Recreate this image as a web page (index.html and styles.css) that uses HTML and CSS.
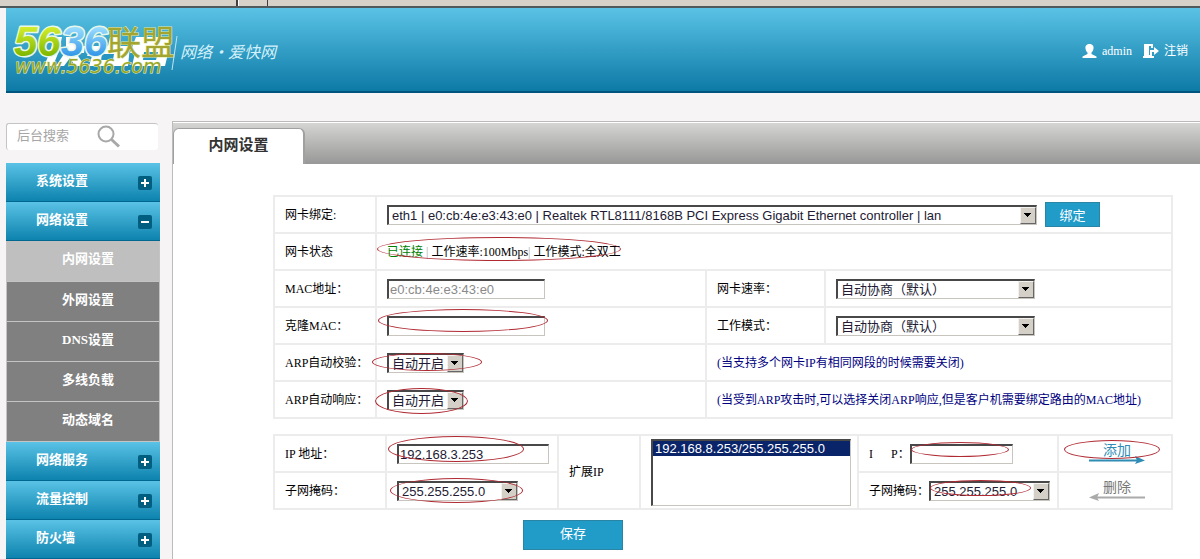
FILE: index.html
```html
<!DOCTYPE html>
<html lang="zh-CN">
<head>
    <meta charset="UTF-8">
    <meta name="viewport" content="width=device-width, initial-scale=1.0">
    <title>内网设置</title>
    <link rel="stylesheet" href="styles.css">
</head>
<body>

<div class="frame-strip"><span class="split wide"></span><span class="split"></span></div>

<div class="page">
    <header class="header">
        <svg class="logo" width="280" height="83" viewBox="0 0 280 83">
            <defs>
                <linearGradient id="green" x1="0" y1="0" x2="0" y2="1">
                    <stop offset="0.200" stop-color="#d3ec2c"/>
                    <stop offset="0.800" stop-color="#7fb800"/>
                </linearGradient>
                <linearGradient id="blue" x1="0" y1="0" x2="0" y2="1">
                    <stop offset="0.200" stop-color="#9adcff"/>
                    <stop offset="0.800" stop-color="#3498e8"/>
                </linearGradient>
            </defs>
            <g fill="#fff">
                <path d="M48 29h8l-3 14-6 15h-9l6-14z"/>
                <path d="M60 29h14l-1 9h6l-1 7h-8l9 13H69l-5-8-6 8h-8l10-15z"/>
                <path d="M86 38h16l2-9h10l-2 9h12l-2 20H83l3-10h-5z"/>
                <path d="M130 29h36l-7 29h-33l3-13h-5z"/>
            </g>
            <g fill="#2796c2">
                <path d="M96 46h12l-1 6H95zM138 44h14l-2 8h-13z"/>
            </g>
            <text class="logo-digits" x="8" y="48"><tspan fill="url(#green)">56</tspan><tspan fill="url(#blue)">36</tspan></text>
            <text class="logo-union" x="101" y="47">联盟</text>
            <text class="logo-url" x="9" y="65">www.5636.com</text>
            <path d="M171 28l-5 34" stroke="#bfe6f4" stroke-width="1"/>
            <text class="logo-name" x="174" y="50">网络·爱快网</text>
        </svg>
        <div class="user">
            <a href="#">
                <svg width="15" height="14" viewBox="0 0 15 14"><path fill="#fff" d="M7.500 0C10 0 12 1.500 11.500 4.500 11.300 7 10 8 9.500 8.500v1.500l5 2.500V14H.5v-1.500l5-2.500V8.500C5 8 3.700 7 3.500 4.500 3 1.500 5 0 7.500 0z"/></svg>
                <span>admin</span>
            </a>
            <a href="#">
                <svg width="16" height="14" viewBox="0 0 16 14"><path fill="#fff" d="M1 0h9v4H8V2H6v9h2v1h3v2H0v-2h1z"/><path fill="#fff" d="M7 6h4V3l5 4-5 4V8H9v4H7z"/></svg>
                <span>注销</span>
            </a>
        </div>
    </header>

    <div class="layout">
        <aside class="sidebar">
            <div class="search">
                <input type="text" placeholder="后台搜索" aria-label="后台搜索">
                <button type="button" aria-label="搜索">
                    <svg width="24" height="24" viewBox="0 0 24 24" fill="none" stroke="#a8a8a8"><circle cx="9" cy="9" r="7.500" stroke-width="2"/><path d="M14.500 14.500l7.500 7" stroke-width="3"/></svg>
                </button>
            </div>
            <nav class="menu">
                <a class="group" href="#">系统设置<i class="toggle plus"></i></a>
                <a class="group" href="#">网络设置<i class="toggle"></i></a>
                <a class="item active" href="#">内网设置</a>
                <a class="item" href="#">外网设置</a>
                <a class="item" href="#">DNS设置</a>
                <a class="item" href="#">多线负载</a>
                <a class="item" href="#">动态域名</a>
                <a class="group" href="#">网络服务<i class="toggle plus"></i></a>
                <a class="group" href="#">流量控制<i class="toggle plus"></i></a>
                <a class="group" href="#">防火墙<i class="toggle plus"></i></a>
            </nav>
        </aside>

        <main class="main">
            <div class="tabs"><h1 class="tab">内网设置</h1></div>

            <form class="content">
                <table class="grid">
                    <colgroup><col class="c-label"><col class="c-field"><col class="c-label2"><col></colgroup>
                    <tr>
                        <td><label for="nic">网卡绑定:</label></td>
                        <td colspan="3">
                            <div class="line">
                                <span class="select w-full"><select id="nic"><option>eth1 | e0:cb:4e:e3:43:e0 | Realtek RTL8111/8168B PCI Express Gigabit Ethernet controller | lan</option></select></span>
                                <button class="btn" type="button">绑定</button>
                            </div>
                        </td>
                    </tr>
                    <tr>
                        <td>网卡状态</td>
                        <td colspan="3"><span class="marked"><span class="ok">已连接</span> <span class="bar">|</span> 工作速率:100Mbps<span class="bar">|</span> 工作模式:全双工<i class="ring ring-status"></i></span></td>
                    </tr>
                    <tr>
                        <td><label for="mac">MAC地址：</label></td>
                        <td><input class="w-mac" id="mac" type="text" value="e0:cb:4e:e3:43:e0" disabled></td>
                        <td><label for="speed">网卡速率：</label></td>
                        <td><span class="select w-mode"><select id="speed"><option>自动协商（默认）</option></select></span></td>
                    </tr>
                    <tr>
                        <td><label for="clone">克隆MAC：</label></td>
                        <td><span class="marked"><input class="w-mac" id="clone" type="text"><i class="ring ring-clone"></i></span></td>
                        <td><label for="mode">工作模式：</label></td>
                        <td><span class="select w-mode"><select id="mode"><option>自动协商（默认）</option></select></span></td>
                    </tr>
                    <tr>
                        <td><label for="arp-check">ARP自动校验：</label></td>
                        <td><span class="select w-arp"><select id="arp-check"><option>自动开启</option></select><i class="ring ring-check"></i></span></td>
                        <td class="note" colspan="2">(当支持多个网卡IP有相同网段的时候需要关闭)</td>
                    </tr>
                    <tr>
                        <td><label for="arp-reply">ARP自动响应：</label></td>
                        <td><span class="select w-arp"><select id="arp-reply"><option>自动开启</option></select><i class="ring ring-reply"></i></span></td>
                        <td class="note" colspan="2">(当受到ARP攻击时,可以选择关闭ARP响应,但是客户机需要绑定路由的MAC地址)</td>
                    </tr>
                </table>

                <table class="grid">
                    <colgroup><col class="c-ip"><col class="c-addr"><col class="c-ext"><col class="c-list"><col class="c-new"><col></colgroup>
                    <tr>
                        <td><label for="ip">IP 地址：</label></td>
                        <td><span class="marked"><input class="w-ip" id="ip" type="text" value="192.168.3.253"><i class="ring ring-ip"></i></span></td>
                        <td rowspan="2"><label for="ext">扩展IP</label></td>
                        <td rowspan="2"><select class="list" id="ext" size="4"><option selected>192.168.8.253/255.255.255.0</option></select></td>
                        <td>
                            <div class="line tight">
                                <label for="ip2" class="spaced"><span>I</span><span>P：</span></label>
                                <span class="marked"><input class="w-new" id="ip2" type="text"><i class="ring ring-new"></i></span>
                            </div>
                        </td>
                        <td class="action">
                            <button class="link add" type="button">添加<svg width="56" height="8" viewBox="0 0 56 8"><path d="M0 4.500h50" stroke="#2f8cb5" stroke-width="2"/><path d="M46 0l10 4.500L46 8l2-3.500z" fill="#2f8cb5"/></svg><i class="ring ring-add"></i></button>
                        </td>
                    </tr>
                    <tr>
                        <td><label for="mask">子网掩码：</label></td>
                        <td><span class="select w-mask"><select id="mask"><option>255.255.255.0</option></select><i class="ring ring-mask"></i></span></td>
                        <td>
                            <div class="line tight">
                                <label for="mask2">子网掩码：</label>
                                <span class="select w-mask"><select id="mask2"><option>255.255.255.0</option></select><i class="ring ring-mask2"></i></span>
                            </div>
                        </td>
                        <td class="action">
                            <button class="link del" type="button">删除<svg width="56" height="8" viewBox="0 0 56 8"><path d="M6 4.500h50" stroke="#aaa" stroke-width="2"/><path d="M10 0L0 4.500 10 8 8 4.500z" fill="#aaa"/></svg></button>
                        </td>
                    </tr>
                </table>

                <div class="submit"><button class="btn save" type="submit">保存</button></div>
            </form>
        </main>
    </div>
</div>

</body>
</html>
```
FILE: styles.css
```css
* {
    box-sizing: border-box;
}
body {
    margin: 0;
    background: #f6f4f5;
    color: #000;
    font: 12px/16px "Liberation Serif", "Noto Sans CJK SC", serif;
}
a {
    color: inherit;
    text-decoration: none;
}

/* grey strip above the page */
.frame-strip {
    display: flex;
    gap: 28px;
    height: 8px;
    padding-left: 236px;
    background: #d6d2ca;
    border-bottom: 2px solid #505a5c;
}
.split {
    width: 1px;
    background: #404040;
}
.split.wide {
    width: 3px;
    background: #fff;
    border-left: 2px solid #404040;
}

.page {
    padding-left: 6px;
}
.header {
    display: flex;
    justify-content: space-between;
    height: 85px;
    background: linear-gradient(#5ac2e5, #0d7aa6);
    border-bottom: 2px solid #00557e;
}
.logo-digits {
    font: italic bold 42px "Liberation Sans", sans-serif;
    stroke: #e8f8e8;
    stroke-width: 3;
    stroke-linejoin: round;
    paint-order: stroke;
}
.logo-union {
    font: 34px "Noto Sans CJK SC", sans-serif;
    fill: #a3a530;
    stroke: #dfe8a0;
    stroke-width: 1;
    paint-order: stroke;
}
.logo-url {
    font: italic 19px "DejaVu Sans", sans-serif;
    fill: #98a624;
    stroke: #eef4c4;
    stroke-width: 1;
    paint-order: stroke;
}
.logo-name {
    font: italic 16px "Noto Sans CJK SC", sans-serif;
    fill: #d3f1fa;
}
.user {
    display: flex;
    gap: 11px;
    align-items: center;
    padding: 2px 12px 0 0;
    color: #fff;
}
.user a {
    display: flex;
    gap: 5px;
    align-items: center;
}

.layout {
    display: flex;
    gap: 12px;
    margin-top: 28px;
}
.sidebar {
    flex: 0 0 154px;
    padding-top: 2px;
}
.search {
    display: flex;
    align-items: center;
    height: 27px;
    margin: 0 2px 13px 0;
    background: #fff;
    border-top: 1px solid #c4c4c4;
    border-left: 1px solid #c4c4c4;
    border-radius: 3px;
}
.search input {
    width: 90px;
    height: 24px;
    padding: 0 0 3px 10px;
    border: 0;
    background: none;
    font-size: 13px;
}
.search input::placeholder {
    color: #a6a6a6;
}
.search button {
    display: flex;
    padding: 0;
    border: 0;
    background: none;
}
.menu a {
    display: flex;
    align-items: center;
    color: #fff;
    font-size: 13px;
    font-weight: bold;
}
.group {
    justify-content: space-between;
    height: 39px;
    padding: 0 8px 2px 30px;
    background: linear-gradient(#5ac2e5, #0d83ae);
    border-bottom: 1px solid #006890;
}
.toggle {
    width: 14px;
    height: 14px;
    margin-top: 4px;
    border-radius: 2px;
    background: linear-gradient(#fff, #fff) center / 8px 2px no-repeat #005f80;
}
.toggle.plus {
    background: linear-gradient(#fff, #fff) center / 8px 2px no-repeat, linear-gradient(#fff, #fff) center / 2px 8px no-repeat #005f80;
}
.item {
    height: 40px;
    padding: 0 0 4px 55px;
    background: #808080;
    border: 1px solid #c4c4c4;
    border-top: 0;
}
.item.active {
    height: 41px;
    background: #bfbfbf;
}

.main {
    flex: 1;
    min-width: 0;
    background: #fff;
    border-left: 1px solid #bbb;
}
.tabs {
    display: flex;
    align-items: flex-end;
    height: 43px;
    background: linear-gradient(#d6d6d4, #979797);
    border-top: 1px solid #bbb;
    box-shadow: inset 0 1px #fff;
}
.tab {
    width: 132px;
    height: 36px;
    margin: 0;
    background: #fff;
    border: 2px solid #a0a0a0;
    border-width: 1px 2px 0 1px;
    border-radius: 6px 6px 0 0;
    color: #333;
    font-size: 15px;
    line-height: 32px;
    text-align: center;
}
.content {
    padding: 31px 27px 0 100px;
}

.grid {
    width: 100%;
    margin-bottom: 15px;
    border-collapse: collapse;
    table-layout: fixed;
}
.grid td {
    height: 37px;
    padding: 0 0 0 10px;
    border: 2px solid #ececec;
}
.c-label { width: 102px; }
.c-field { width: 330px; }
.c-label2 { width: 119px; }
.c-ip { width: 112px; }
.c-addr { width: 172px; }
.c-ext { width: 82px; }
.c-list { width: 218px; }
.c-new { width: 200px; }

.line {
    display: flex;
    gap: 8px;
    align-items: center;
}
.line.tight {
    gap: 0;
}
.spaced {
    display: flex;
    gap: 18px;
}
.ok {
    color: #008000;
}
.bar {
    color: #aaa;
}
.grid .note {
    color: #00007f;
}

.content input, .content select {
    display: block;
    height: 20px;
    margin: 0;
    padding: 0 1px;
    border: 2px solid #484848;
    border-right: 1px solid #c8c5be;
    border-bottom: 1px solid #c8c5be;
    border-radius: 0;
    background: #fff;
    color: #221a33;
    font: 13px "Liberation Sans", "Noto Sans CJK SC", sans-serif;
}
.content input:disabled {
    color: #8a8a8a;
}
.content .select select {
    width: 100%;
    padding: 0 18px 0 3px;
    appearance: none;
}
.select {
    position: relative;
    display: block;
}
/* grey drop-down button, the arrow is four stacked bars */
.select::after {
    content: "";
    position: absolute;
    top: 2px;
    right: 1px;
    width: 16px;
    height: 17px;
    border: 1px solid #f4f2ee;
    border-right-color: #666;
    border-bottom-color: #666;
    background:
        linear-gradient(#000, #000) 3px 5px / 7px 1px no-repeat,
        linear-gradient(#000, #000) 4px 6px / 5px 1px no-repeat,
        linear-gradient(#000, #000) 5px 7px / 3px 1px no-repeat,
        linear-gradient(#000, #000) 6px 8px / 1px 1px no-repeat #d4d0c8;
    box-sizing: border-box;
    pointer-events: none;
}
.w-full { width: 650px; }
.w-mac { width: 158px; }
.w-mode { width: 199px; }
.w-arp { width: 77px; }
.w-ip { width: 152px; }
.w-new { width: 103px; }
.w-mask { width: 121px; }

.content .list {
    width: 200px;
    height: 67px;
    padding: 0;
    overflow: hidden;
}
.list option {
    padding: 0 2px;
}
.list option:checked {
    background: #0a246a linear-gradient(#0a246a, #0a246a);
    color: #fff;
}

.btn {
    width: 55px;
    height: 25px;
    padding: 0;
    border: 1px solid #2a85a5;
    background: #219cc9;
    color: #fff;
    font: 13px/20px "Noto Sans CJK SC", sans-serif;
}
.btn.save {
    width: 100px;
    height: 30px;
    padding-bottom: 4px;
}
.submit {
    margin-top: -5px;
    padding-left: 250px;
}
.grid .action {
    padding: 0 0 2px 4px;
    text-align: center;
}
.link {
    position: relative;
    display: inline-flex;
    flex-direction: column;
    align-items: center;
    padding: 0;
    border: 0;
    background: none;
    font: 14px/14px "Noto Sans CJK SC", sans-serif;
    vertical-align: middle;
}
.link.add { color: #2f8cb5; }
.link.del { color: #777; }

/* red ovals round the fields to fill in */
.marked {
    position: relative;
    display: inline-block;
    vertical-align: middle;
}
.ring {
    position: absolute;
    z-index: 1;
    border: 1px solid #b02a33;
    border-radius: 50%;
    pointer-events: none;
}
.ring-status { left: -10px; top: -7px; width: 244px; height: 24px; }
.ring-clone { left: -9px; top: -7px; width: 170px; height: 23px; }
.ring-check { left: -15px; top: 0; width: 110px; height: 18px; }
.ring-reply { left: -12px; top: -2px; width: 93px; height: 26px; }
.ring-ip { left: -9px; top: -8px; width: 136px; height: 26px; }
.ring-mask { left: -7px; top: -3px; width: 133px; height: 25px; }
.ring-new { left: 1px; top: -2px; width: 98px; height: 15px; }
.ring-mask2 { left: 1px; top: -1px; width: 101px; height: 16px; }
.ring-add { left: -25px; top: -2px; width: 96px; height: 19px; }
```
